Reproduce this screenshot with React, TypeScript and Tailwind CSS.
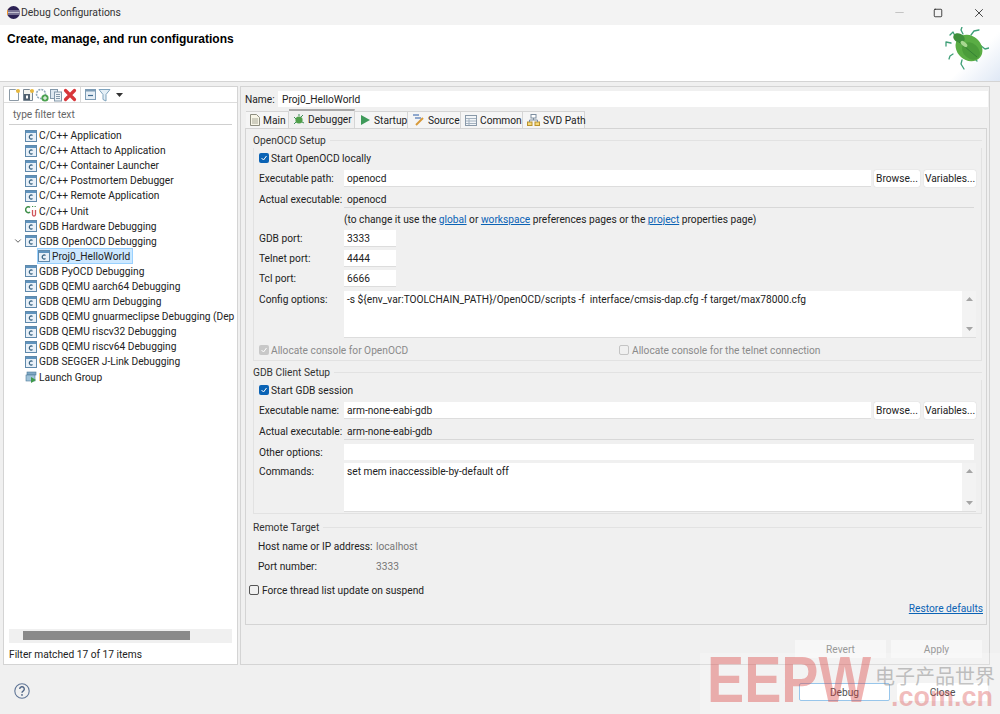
import type { ReactNode } from 'react';
import { ChevronDown, Minus, Square, X } from 'lucide-react';

const treeItems = [
  'C/C++ Application',
  'C/C++ Attach to Application',
  'C/C++ Container Launcher',
  'C/C++ Postmortem Debugger',
  'C/C++ Remote Application',
  'C/C++ Unit',
  'GDB Hardware Debugging',
  'GDB OpenOCD Debugging',
  'Proj0_HelloWorld',
  'GDB PyOCD Debugging',
  'GDB QEMU aarch64 Debugging',
  'GDB QEMU arm Debugging',
  'GDB QEMU gnuarmeclipse Debugging (Dep',
  'GDB QEMU riscv32 Debugging',
  'GDB QEMU riscv64 Debugging',
  'GDB SEGGER J-Link Debugging',
  'Launch Group',
];

function CIcon() {
  return (
    <svg width="12" height="12" viewBox="0 0 12 12" className="shrink-0">
      <rect x="0.5" y="0.5" width="11" height="11" fill="#e8f0f8" stroke="#5f89ab" />
      <rect x="1" y="1" width="10" height="2" fill="#5f93bd" />
      <path d="M7.5 5.4 A2 2 0 1 0 7.5 8.6" fill="none" stroke="#35607f" strokeWidth="1.2" />
    </svg>
  );
}

function UnitIcon() {
  return (
    <svg width="12" height="13" viewBox="0 0 12 13" className="shrink-0">
      <path d="M5 2.4 A2.6 3 0 1 0 5 7" fill="none" stroke="#3f8f4a" strokeWidth="1.5" />
      <path d="M7.5 5 V9.5 A1.5 1.5 0 0 0 10.5 9.5 V5" fill="none" stroke="#d0545a" strokeWidth="1.3" />
      <path d="M7 1.5h1.2M9.6 1.5h1.2" stroke="#3f8f4a" strokeWidth="1.2" />
    </svg>
  );
}

function LaunchIcon() {
  return (
    <svg width="12" height="12" viewBox="0 0 12 12" className="shrink-0">
      <rect x="2" y="1" width="9" height="3" fill="#7fa8c4" stroke="#4d7a99" strokeWidth="0.6" />
      <rect x="1" y="4" width="9" height="6" fill="#9fc2d8" stroke="#4d7a99" strokeWidth="0.6" />
      <path d="M6 6l5 3-5 3z" fill="#3f9a4a" />
    </svg>
  );
}

function ToolbarIcons() {
  return (
    <div className="flex h-[15px] items-center pl-[3px]">
      <svg width="14" height="14" viewBox="0 0 14 14">
        <path d="M2.5 1.5h6l3 3v8h-9z" fill="#fff" stroke="#8c9aa6" />
        <circle cx="11" cy="3" r="2" fill="#e8b83c" />
      </svg>
      <svg width="14" height="14" viewBox="0 0 14 14">
        <path d="M2.5 1.5h6l3 3v8h-9z" fill="#f4f4ee" stroke="#7a8894" />
        <rect x="3" y="6" width="6" height="6" fill="#50606e" />
        <rect x="5" y="7.5" width="2" height="3" fill="#fff" />
        <circle cx="11" cy="3" r="2" fill="#e8b83c" />
      </svg>
      <svg width="14" height="14" viewBox="0 0 14 14">
        <circle cx="6" cy="6" r="4.5" fill="none" stroke="#8fa6b8" strokeWidth="1.6" strokeDasharray="2 1" />
        <circle cx="10" cy="10" r="3.6" fill="#4ba24f" />
        <path d="M8 10h4M10 8v4" stroke="#fff" />
      </svg>
      <svg width="14" height="14" viewBox="0 0 14 14">
        <rect x="1.5" y="1.5" width="7" height="9" fill="#dfe8f0" stroke="#8398aa" />
        <rect x="5.5" y="4" width="7" height="9" fill="#eef3f7" stroke="#8398aa" />
        <path d="M7 6.5h4M7 8.5h4M7 10.5h4" stroke="#8398aa" />
      </svg>
      <svg width="14" height="14" viewBox="0 0 14 14">
        <path d="M2.5 2.5l9 9M11.5 2.5l-9 9" stroke="#d8363a" strokeWidth="3.2" strokeLinecap="round" />
      </svg>
      <div className="mx-[3px] h-[15px] w-px bg-[#d9d9d9]" />
      <svg width="13" height="13" viewBox="0 0 13 13">
        <rect x="1.5" y="1.5" width="10" height="10" fill="#e6eef5" stroke="#7d9bb5" />
        <rect x="1.5" y="1.5" width="10" height="2" fill="#7d9bb5" />
        <path d="M4 7.5h5" stroke="#3f6b8f" strokeWidth="1.2" />
      </svg>
      <svg width="13" height="14" viewBox="0 0 13 14" className="ml-px">
        <path d="M1 1.5h11L8 6.5V13L5 11.5v-5z" fill="#e4eff6" stroke="#7fa3bd" />
      </svg>
      <svg width="7" height="4" viewBox="0 0 7 4" className="ml-[5px]">
        <path d="M0 0h7L3.5 4z" fill="#333" />
      </svg>
    </div>
  );
}

function Bug() {
  return (
    <svg width="44" height="44" viewBox="0 0 44 44">
      <g stroke="#3f9f78" strokeWidth="1.3" fill="none" strokeLinecap="round" strokeLinejoin="round">
        <path d="M10 9L8 5 5 8M18 7L16 3l1-3M26 8l3-4 5-1M35 18l5 4 4-1M6 16L1 15v4M8 27l-3 2-1 3M17 33l-1 4 3 5M30 32l2 2" />
      </g>
      <ellipse cx="24" cy="21" rx="14.5" ry="12" transform="rotate(42 24 21)" fill="#5aad44" />
      <ellipse cx="26" cy="24" rx="10" ry="7.5" transform="rotate(42 26 24)" fill="#4b9c3a" />
      <ellipse cx="14" cy="11" rx="6" ry="4.5" transform="rotate(25 14 11)" fill="#3f8f3a" />
      <path d="M14 15l18 15" stroke="#2f7a32" strokeWidth="0.8" />
      <ellipse cx="19" cy="17" rx="4" ry="2" transform="rotate(40 19 17)" fill="#a8d890" />
    </svg>
  );
}

function Btn({ children, w = 'w-[46px]' }: { children: ReactNode; w?: string }) {
  return (
    <div className={`${w} flex h-[17px] items-center justify-center rounded-[2px] bg-white text-[#222] shadow-[0_0_1px_#bbb]`}>
      {children}
    </div>
  );
}

function Check({ disabled }: { disabled?: boolean }) {
  return (
    <div className={`flex h-[10px] w-[10px] items-center justify-center rounded-[2px] ${disabled ? 'bg-[#c8c8c8]' : 'bg-[#0b63b5]'}`}>
      <svg width="8" height="8" viewBox="0 0 8 8">
        <path d="M1.5 4l2 2 3-4" fill="none" stroke="#fff" strokeWidth="1" />
      </svg>
    </div>
  );
}

function Label({ children, className = '' }: { children: ReactNode; className?: string }) {
  return <div className={`w-[85px] shrink-0 whitespace-nowrap ${className}`}>{children}</div>;
}

function PathRow({ label, value }: { label: string; value: string }) {
  return (
    <div className="flex h-[16px] items-center">
      <Label>{label}</Label>
      <div className="h-full w-[527px] bg-white pl-[3px] leading-[17px] shadow-[0_1px_0_#ddd]">{value}</div>
      <div className="ml-[3px] flex gap-[4px]">
        <Btn>Browse...</Btn>
        <Btn w="w-[52px]">Variables...</Btn>
      </div>
    </div>
  );
}

function ReadRow({ label, value }: { label: string; value: string }) {
  return (
    <div className="flex h-[17px] items-center">
      <Label>{label}</Label>
      <div className="h-full w-[630px] border-b border-[#d8d8d8] pl-[3px] leading-[17px]">{value}</div>
    </div>
  );
}

function PortRow({ label, value }: { label: string; value: string }) {
  return (
    <div className="flex h-[16px] items-center">
      <Label>{label}</Label>
      <div className="h-full w-[52px] bg-white pl-[3px] leading-[17px] shadow-[0_1px_0_#ddd]">{value}</div>
    </div>
  );
}

function TextArea({ label, value, h }: { label: string; value: string; h: string }) {
  return (
    <div className={`flex ${h}`}>
      <Label className="pt-[1px]">{label}</Label>
      <div className="flex flex-1 bg-white shadow-[0_1px_0_#ddd]">
        <div className="flex-1 whitespace-pre pl-[3px] pt-[1px]">{value}</div>
        <div className="flex w-[14px] flex-col items-center justify-between bg-[#f3f3f3] py-[6px]">
          <svg width="7" height="4" viewBox="0 0 7 4"><path d="M0 4h7L3.5 0z" fill="#a5a5a5" /></svg>
          <svg width="7" height="4" viewBox="0 0 7 4"><path d="M0 0h7L3.5 4z" fill="#a5a5a5" /></svg>
        </div>
      </div>
    </div>
  );
}

function Group({ title, className, children }: { title: string; className: string; children: ReactNode }) {
  return (
    <div className={`ml-[7px] mr-[4px] flex flex-col ${className}`}>
      <div className="flex h-[16px] items-center">
        <span className="pr-[4px] text-[#333]">{title}</span>
        <div className="h-px flex-1 bg-[#e2e2e2]" />
      </div>
      <div className="flex-1 border-x border-b border-[#e2e2e2] px-[5px]">{children}</div>
    </div>
  );
}

function Tab({ children, w, active }: { children: ReactNode; w: string; active?: boolean }) {
  return (
    <div className={`flex items-center gap-[3px] whitespace-nowrap border-r border-[#d5d5d5] pl-[4px] [&>svg]:shrink-0 ${w} ${active ? 'h-[19px] border-t-2 border-t-[#a8a8a8] bg-[#f0f0f0]' : 'h-[17px] border-t border-t-[#d5d5d5] bg-[#f5f5f5]'}`}>
      {children}
    </div>
  );
}

export default function App() {
  return (
    <div
      className="relative flex h-[714px] w-[1000px] flex-col overflow-hidden bg-[#f0f0f0] text-[10.2px] leading-[15px] text-[#222]"
      style={{ fontFamily: 'Roboto, "Liberation Sans", sans-serif' }}
    >
      {/* title bar */}
      <div className="flex h-[25px] shrink-0 items-center bg-[#f3f3f3] pl-[7px]">
        <svg width="13" height="13" viewBox="0 0 13 13">
          <circle cx="6.5" cy="6.5" r="6.5" fill="#2c2255" />
          <path d="M0.3 5h12.4M0.3 6.5h12.4M0.3 8h12.4" stroke="#e8e8f0" strokeWidth="0.8" />
          <path d="M1 3A6.5 6.5 0 0 1 5 0.2 6.5 6.5 0 0 0 1 10z" fill="#f7941e" />
        </svg>
        <span className="ml-[1px] text-[10.4px] text-[#333]">Debug Configurations</span>
        <div className="ml-auto flex items-center">
          <Minus size={13} className="mr-[27px] text-[#c4c4c4]" />
          <Square size={10} className="mr-[29px] text-[#222]" />
          <X size={14} strokeWidth={1.4} className="mr-[14px] text-[#222]" />
        </div>
      </div>

      {/* banner */}
      <div className="flex h-[57px] shrink-0 justify-between border-b border-[#d4d4d4] bg-white">
        <div className="pl-[7px] pt-[7px] text-[12px] font-bold text-black" style={{ fontFamily: '"Liberation Sans", sans-serif' }}>
          Create, manage, and run configurations
        </div>
        <div className="w-[58px] bg-gradient-to-br from-white from-55% to-[#dfe8f5] pl-[3px] pt-[2px]">
          <Bug />
        </div>
      </div>

      {/* main */}
      <div className="flex h-[583px] shrink-0 gap-[2px] pl-[3px] pt-[4px]">
        <div className="flex w-[235px] flex-col border border-[#d4d4d4] bg-white">
          <ToolbarIcons />
          <div className="h-px bg-[#dcdcdc]" />
          <div className="mx-[5px] mt-[4px] h-[18px] border-b border-[#cfcfcf] pl-[4px] text-[#666]">type filter text</div>
          <div className="mt-[3px] flex-1 overflow-hidden">
            {treeItems.map((item, i) => (
              <div key={item} className="flex h-[15.1px] items-center">
                <div className="flex w-[21px] shrink-0 justify-end pr-[1px]">
                  {i === 7 && <ChevronDown size={10} strokeWidth={2} className="mr-[1px] text-[#444]" />}
                </div>
                <div className={`flex min-w-0 flex-1 items-center ${i === 8 ? 'pl-[13px]' : ''}`}>
                  <div className={`flex items-center gap-[2px] ${i === 8 ? 'h-[14px] bg-[#cde8ff] pr-[2px] outline outline-1 outline-[#99d1ff]' : ''}`}>
                    {i === 5 ? <UnitIcon /> : i === 16 ? <LaunchIcon /> : <CIcon />}
                    <span className="whitespace-nowrap">{item}</span>
                  </div>
                </div>
              </div>
            ))}
          </div>
          <div className="mx-[5px] h-[14px] bg-[#f0f0f0] pl-[14px] pt-[2px]">
            <div className="h-[9px] w-[167px] bg-[#8a8a8a]" />
          </div>
          <div className="flex h-[21px] items-center pl-[5px] pt-[2px]">Filter matched 17 of 17 items</div>
        </div>

        <div className="flex w-[750px] flex-col border border-[#d4d4d4] bg-[#f0f0f0] pl-[4px]">
          <div className="mt-[4px] flex h-[16px] items-center">
            <span className="w-[33px]">Name:</span>
            <div className="h-full w-[710px] bg-white pl-[4px] leading-[17px]">Proj0_HelloWorld</div>
          </div>
          <div className="mt-[3px] flex h-[18px] items-end pl-[1px]">
            <Tab w="w-[43px]">
              <svg width="10" height="12" viewBox="0 0 10 12"><path d="M0.5 0.5h6l3 3v8h-9z" fill="#f8f6e8" stroke="#8e8e80" /><path d="M2 5h6M2 7h6M2 9h6" stroke="#a8a898" /></svg>
              Main
            </Tab>
            <Tab w="w-[66px]" active>
              <svg width="12" height="12" viewBox="0 0 12 12"><path d="M1 3l2 2M1 10l2-2M10 1L8 3M11 9L9 8M6 0v2" stroke="#3f8f5a" /><circle cx="6" cy="6" r="3.6" fill="#4f9f4a" /></svg>
              Debugger
            </Tab>
            <Tab w="w-[53px]">
              <svg width="12" height="12" viewBox="0 0 12 12"><path d="M2 1l9 5-9 5z" fill="#3f9a5a" /></svg>
              Startup
            </Tab>
            <Tab w="w-[53px]">
              <svg width="13" height="12" viewBox="0 0 13 12"><path d="M1 1h6M3 4h6" stroke="#6f8fc0" strokeWidth="1.5" /><path d="M4 11l7-7" stroke="#d89a3a" strokeWidth="2" /></svg>
              Source
            </Tab>
            <Tab w="w-[62px]">
              <svg width="12" height="11" viewBox="0 0 12 11"><rect x="0.5" y="0.5" width="11" height="10" fill="#f2f5f8" stroke="#8898a8" /><path d="M1 3.5h10M1 6h10M1 8.5h10M4 3v7" stroke="#a4b2c0" /></svg>
              Common
            </Tab>
            <Tab w="w-[62px]">
              <svg width="13" height="12" viewBox="0 0 13 12"><rect x="4" y="0.5" width="5" height="3.5" fill="#fff" stroke="#7d8ea0" /><rect x="0.5" y="8" width="4.5" height="3.5" fill="#f6d97a" stroke="#b8922e" /><rect x="8" y="8" width="4.5" height="3.5" fill="#f6d97a" stroke="#b8922e" /><path d="M6.5 4v2M2.5 8V6h8v2" fill="none" stroke="#7d8ea0" /></svg>
              SVD Path
            </Tab>
          </div>

          <div className="flex h-[497px] w-[742px] flex-col border border-[#d4d4d4] pt-[3px]">
            <Group title="OpenOCD Setup" className="h-[229px]">
              <div className="mt-[2px] flex h-[16px] items-center gap-[2px]"><Check /> Start OpenOCD locally</div>
              <div className="mt-[4px]"><PathRow label="Executable path:" value="openocd" /></div>
              <div className="mt-[5px]"><ReadRow label="Actual executable:" value="openocd" /></div>
              <div className="mt-[2px] flex h-[18px] items-center whitespace-nowrap pl-[85px]">
                (to change it use the&nbsp;
                <span className="text-[#0b63b5] underline">global</span>&nbsp;or&nbsp;
                <span className="text-[#0b63b5] underline">workspace</span>&nbsp;preferences pages or the&nbsp;
                <span className="text-[#0b63b5] underline">project</span>&nbsp;properties page)
              </div>
              <div className="mt-[2px]"><PortRow label="GDB port:" value="3333" /></div>
              <div className="mt-[4px]"><PortRow label="Telnet port:" value="4444" /></div>
              <div className="mt-[4px]"><PortRow label="Tcl port:" value="6666" /></div>
              <div className="mt-[5px]"><TextArea label="Config options:" h="h-[46px]" value="-s ${env_var:TOOLCHAIN_PATH}/OpenOCD/scripts -f  interface/cmsis-dap.cfg -f target/max78000.cfg" /></div>
              <div className="mt-[5px] flex h-[16px] items-center text-[#8a8a8a]">
                <div className="flex w-[360px] items-center gap-[2px]"><Check disabled /> Allocate console for OpenOCD</div>
                <div className="flex items-center gap-[3px]"><div className="h-[10px] w-[10px] rounded-[2px] border border-[#c4c4c4]" /> Allocate console for the telnet connection</div>
              </div>
            </Group>

            <Group title="GDB Client Setup" className="mt-[3px] h-[150px]">
              <div className="mt-[2px] flex h-[16px] items-center gap-[2px]"><Check /> Start GDB session</div>
              <div className="mt-[4px]"><PathRow label="Executable name:" value="arm-none-eabi-gdb" /></div>
              <div className="mt-[5px]"><ReadRow label="Actual executable:" value="arm-none-eabi-gdb" /></div>
              <div className="mt-[4px] flex h-[16px] items-center">
                <Label>Other options:</Label>
                <div className="h-full w-[630px] bg-white" />
              </div>
              <div className="mt-[3px]"><TextArea label="Commands:" h="h-[48px]" value="set mem inaccessible-by-default off" /></div>
            </Group>

            <Group title="Remote Target" className="mt-[5px] h-[58px] [&>div:last-child]:border-0">
              <div className="mt-[1px] flex h-[20px] items-center whitespace-nowrap">
                <div className="w-[118px]">Host name or IP address:</div>
                <span className="text-[#777]">localhost</span>
              </div>
              <div className="flex h-[20px] items-center">
                <div className="w-[118px]">Port number:</div>
                <span className="text-[#777]">3333</span>
              </div>
            </Group>

            <div className="ml-[3px] mt-[5px] flex h-[16px] items-center gap-[3px]">
              <div className="h-[10px] w-[10px] rounded-[2px] border border-[#555]" />
              Force thread list update on suspend
            </div>
            <div className="mr-[3px] mt-[3px] text-right text-[#0b63b5] underline">Restore defaults</div>
          </div>

          <div className="mr-[7px] mt-[15px] flex justify-end gap-[5px] text-[#999]">
            <div className="flex h-[18px] w-[91px] items-center justify-center bg-[#f7f7f7]">Revert</div>
            <div className="flex h-[18px] w-[91px] items-center justify-center bg-[#f7f7f7]">Apply</div>
          </div>
        </div>
      </div>

      {/* footer */}
      <div className="flex flex-1 items-start pt-[18px]">
        <svg width="16" height="16" viewBox="0 0 16 16" className="ml-[14px]">
          <circle cx="8" cy="8" r="7.2" fill="none" stroke="#5f7596" strokeWidth="1.1" />
          <path d="M5.7 6.1a2.3 2.3 0 1 1 3.4 2c-.8.5-1.1.8-1.1 1.7" fill="none" stroke="#4f6585" strokeWidth="1.4" />
          <circle cx="8" cy="11.9" r="0.9" fill="#4f6585" />
        </svg>
        <div className="ml-auto mr-[12px] flex gap-[7px]">
          <div className="flex h-[18px] w-[91px] items-center justify-center rounded-[2px] border border-[#7fb8e6] bg-white">Debug</div>
          <div className="flex h-[18px] w-[91px] items-center justify-center rounded-[2px] bg-white">Close</div>
        </div>
      </div>

      {/* EEPW watermark */}
      <div className="pointer-events-none absolute bottom-0 right-0 h-[61px] w-[300px] bg-white/20">
        <div className="absolute left-[7px] top-[-5px] origin-left scale-x-[0.87] text-[64px] font-bold leading-[64px] text-[#d9413f]/40" style={{ fontFamily: '"Liberation Sans", sans-serif' }}>
          EEPW
        </div>
        <div className="absolute left-[191px] top-[30px] whitespace-nowrap text-[27px] font-bold leading-[28px] text-[#d9413f]/35" style={{ fontFamily: '"Liberation Sans", sans-serif' }}>
          .com.cn
        </div>
        <div className="absolute left-[175px] top-[11px] whitespace-nowrap text-[20px] leading-[24px] text-[#888]/50" style={{ fontFamily: '"Noto Sans CJK SC", sans-serif' }}>
          电子产品世界
        </div>
      </div>
    </div>
  );
}
